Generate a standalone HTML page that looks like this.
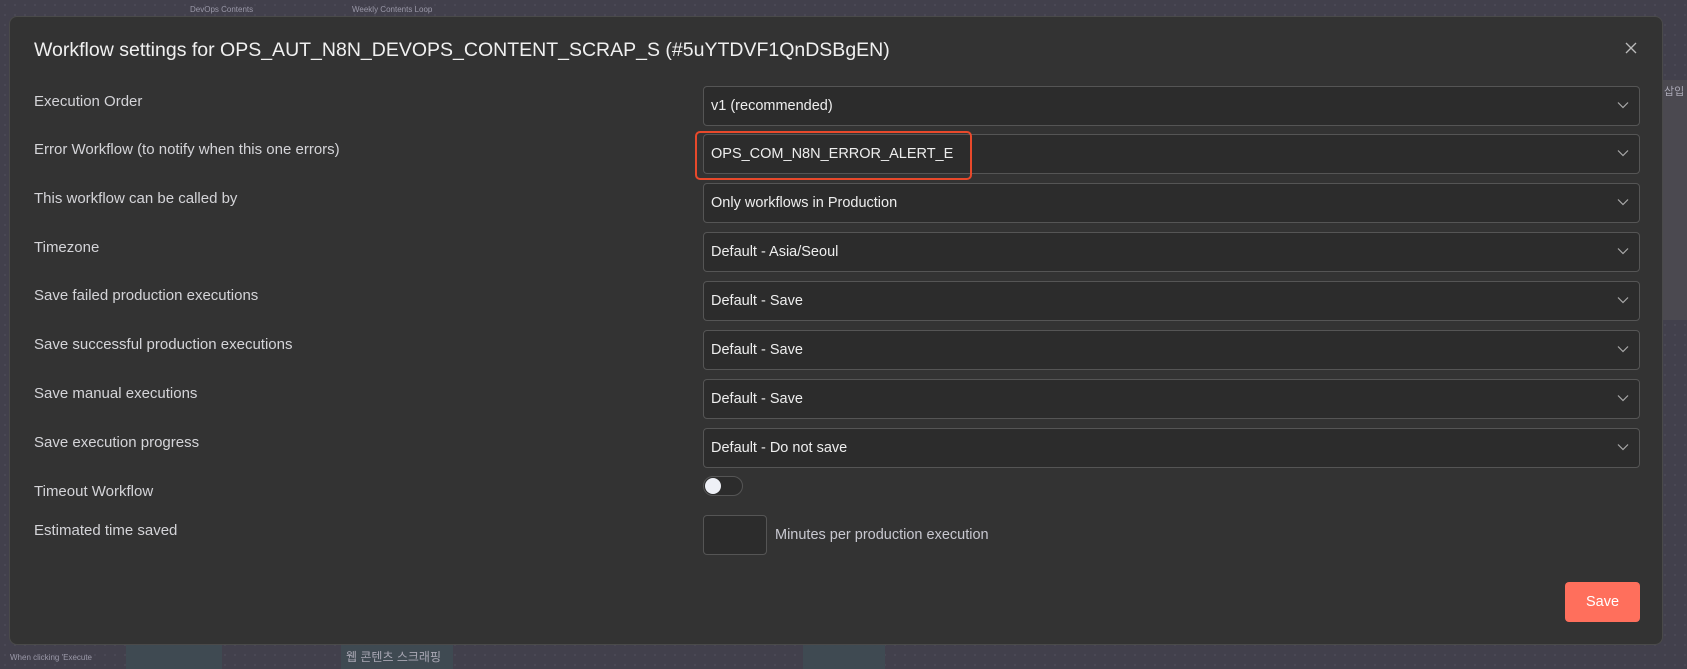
<!DOCTYPE html>
<html><head><meta charset="utf-8"><style>
*{box-sizing:border-box;margin:0;padding:0}
html,body{width:1687px;height:669px;overflow:hidden}
body{background:#42404c;background-image:radial-gradient(#4d4b58 1px,transparent 1px);background-size:10px 10px;font-family:"Liberation Sans","Noto Sans CJK KR",sans-serif;position:relative}
.bgblk{position:absolute;background:#4a4851}
.modal{position:absolute;left:9px;top:16px;width:1654px;height:629px;background:#333333;border:1px solid #4a4a4a;border-radius:8px}
.title{position:absolute;left:24px;top:22px;font-size:19.5px;color:#f0f0f0;white-space:nowrap}
.close{position:absolute;left:1614px;top:24px;width:14px;height:14px}
.lbl{position:absolute;left:24px;font-size:15px;color:#d4d4d8;white-space:nowrap}
.sel{position:absolute;left:693px;width:937px;height:40px;background:#2c2c2c;border:1px solid #555;border-radius:4px;color:#eee;font-size:14.5px;line-height:38px;padding-left:7px}
.sel svg{position:absolute;right:10px;top:14px}
.red{position:absolute;left:685px;top:114px;width:277px;height:49px;border:2px solid #e8492b;border-radius:5px}
.tog{position:absolute;left:693px;top:459px;width:40px;height:20px;border:1px solid #555;border-radius:10px;background:#2c2c2c}
.tog i{position:absolute;left:1px;top:1px;width:16px;height:16px;border-radius:50%;background:#eef0f6}
.inp{position:absolute;left:693px;top:498px;width:64px;height:40px;border:1px solid #555;border-radius:4px;background:#2c2c2c}
.mins{position:absolute;left:765px;top:510px;font-size:14.5px;color:#c8c8d0}
.save{position:absolute;left:1555px;top:565px;width:75px;height:40px;background:#ff6f5c;border-radius:4px;color:#fff;font-size:14.5px;text-align:center;line-height:40px}
.small{position:absolute;font-size:8px;color:#9a98a8}
</style></head><body>
<div class="bgblk" style="left:1663px;top:80px;width:24px;height:240px;background:#4b4950"></div>
<div class="bgblk" style="left:126px;top:640px;width:96px;height:29px;background:#3f4a52"></div>
<div class="bgblk" style="left:341px;top:640px;width:112px;height:29px;background:#3f4a52"></div>
<div class="bgblk" style="left:803px;top:640px;width:82px;height:29px;background:#3f4a52"></div>
<div class="small" style="left:190px;top:5px">DevOps Contents</div>
<div class="small" style="left:352px;top:5px">Weekly Contents Loop</div>
<div class="small" style="left:10px;top:653px">When clicking 'Execute</div>
<div class="small" style="left:346px;top:648px;font-size:12px;color:#a9a7b4">웹 콘텐츠 스크래핑</div>
<div class="small" style="left:1664px;top:83px;font-size:11px;color:#a9a7b4">삽입</div>
<div class="modal">
<div class="title">Workflow settings for OPS_AUT_N8N_DEVOPS_CONTENT_SCRAP_S (#5uYTDVF1QnDSBgEN)</div>
<svg class="close" viewBox="0 0 14 14"><path d="M2 2L12 12M12 2L2 12" stroke="#bbb" stroke-width="1.3"/></svg>
<div class="lbl" style="top:76px">Execution Order</div>
<div class="lbl" style="top:124px">Error Workflow (to notify when this one errors)</div>
<div class="lbl" style="top:173px">This workflow can be called by</div>
<div class="lbl" style="top:222px">Timezone</div>
<div class="lbl" style="top:270px">Save failed production executions</div>
<div class="lbl" style="top:319px">Save successful production executions</div>
<div class="lbl" style="top:368px">Save manual executions</div>
<div class="lbl" style="top:417px">Save execution progress</div>
<div class="lbl" style="top:466px">Timeout Workflow</div>
<div class="lbl" style="top:505px">Estimated time saved</div>
<div class="sel" style="top:69px">v1 (recommended)<svg width="12" height="8" viewBox="0 0 12 8"><path d="M1 1.5L6 6.5L11 1.5" stroke="#aaa" fill="none" stroke-width="1.2"/></svg></div>
<div class="sel" style="top:117px">OPS_COM_N8N_ERROR_ALERT_E<svg width="12" height="8" viewBox="0 0 12 8"><path d="M1 1.5L6 6.5L11 1.5" stroke="#aaa" fill="none" stroke-width="1.2"/></svg></div>
<div class="sel" style="top:166px">Only workflows in Production<svg width="12" height="8" viewBox="0 0 12 8"><path d="M1 1.5L6 6.5L11 1.5" stroke="#aaa" fill="none" stroke-width="1.2"/></svg></div>
<div class="sel" style="top:215px">Default - Asia/Seoul<svg width="12" height="8" viewBox="0 0 12 8"><path d="M1 1.5L6 6.5L11 1.5" stroke="#aaa" fill="none" stroke-width="1.2"/></svg></div>
<div class="sel" style="top:264px">Default - Save<svg width="12" height="8" viewBox="0 0 12 8"><path d="M1 1.5L6 6.5L11 1.5" stroke="#aaa" fill="none" stroke-width="1.2"/></svg></div>
<div class="sel" style="top:313px">Default - Save<svg width="12" height="8" viewBox="0 0 12 8"><path d="M1 1.5L6 6.5L11 1.5" stroke="#aaa" fill="none" stroke-width="1.2"/></svg></div>
<div class="sel" style="top:362px">Default - Save<svg width="12" height="8" viewBox="0 0 12 8"><path d="M1 1.5L6 6.5L11 1.5" stroke="#aaa" fill="none" stroke-width="1.2"/></svg></div>
<div class="sel" style="top:411px">Default - Do not save<svg width="12" height="8" viewBox="0 0 12 8"><path d="M1 1.5L6 6.5L11 1.5" stroke="#aaa" fill="none" stroke-width="1.2"/></svg></div>
<div class="red"></div>
<div class="tog"><i></i></div>
<div class="inp"></div>
<div class="mins">Minutes per production execution</div>
<div class="save">Save</div>
</div>
</body></html>
